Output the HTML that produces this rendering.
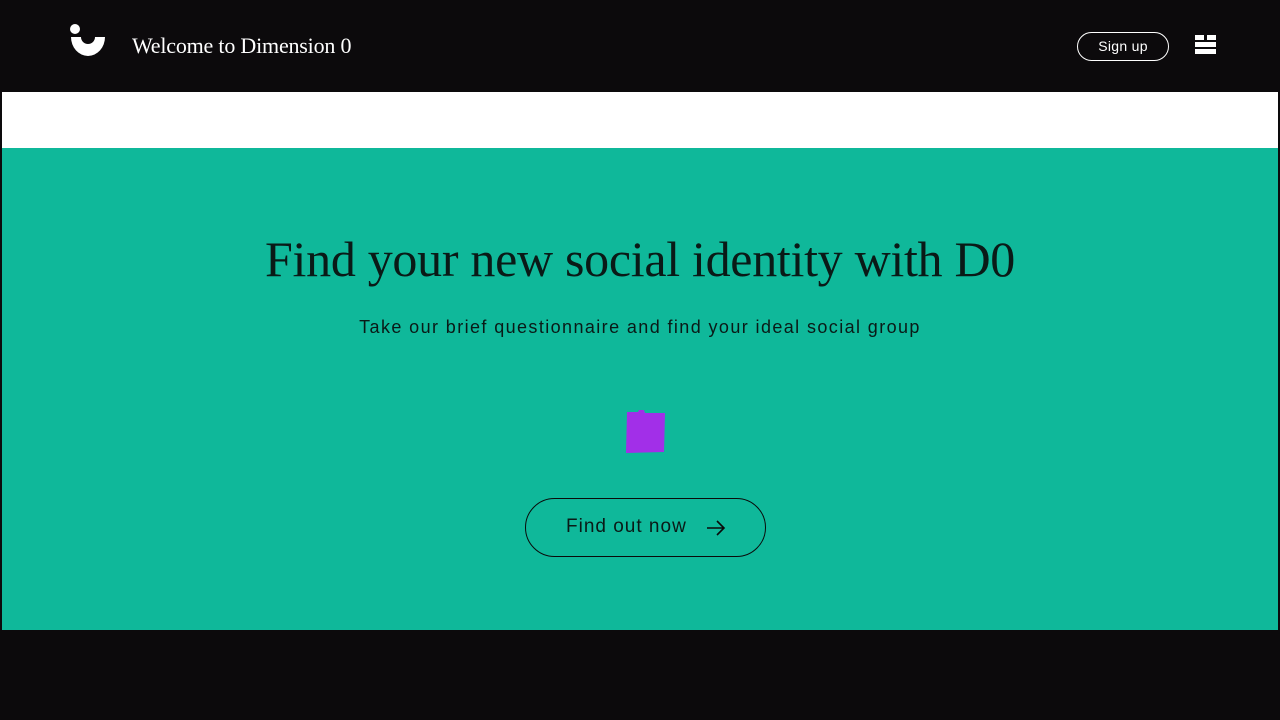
<!DOCTYPE html>
<html><head><style>
body{margin:0;width:1280px;height:720px;background:#0c0a0c;position:relative;overflow:hidden;font-family:"Liberation Sans",sans-serif}
.w{position:absolute;left:2px;width:1276px;top:92px;height:56px;background:#fff}
.t{position:absolute;left:2px;width:1276px;top:148px;height:482px;background:#0fb89a}
.title{position:absolute;left:0;width:1280px;top:230px;text-align:center;font-family:"Liberation Serif",serif;font-size:50px;color:#0a1a17;letter-spacing:-0.3px}
.sub{position:absolute;left:0;width:1280px;top:317px;text-align:center;font-size:18px;color:#0a1a17;letter-spacing:1.4px}
.btn{position:absolute;left:525px;top:498px;width:239px;height:57px;border:1.5px solid #0a0a0a;border-radius:30px;box-sizing:content-box}
.btn span{position:absolute;left:40px;top:17px;font-size:19px;color:#0a1a17;letter-spacing:1px}
.brand{position:absolute;left:132px;top:33px;font-family:"Liberation Serif",serif;font-size:22px;color:#fff;letter-spacing:-0.2px}
.su{position:absolute;left:1077px;top:32px;width:90px;height:27px;border:1.5px solid #fff;border-radius:15px;color:#fff;font-size:14px;text-align:center;line-height:27px;letter-spacing:0.3px}
</style></head><body>
<svg style="position:absolute;left:66px;top:20px" width="44" height="40"><circle cx="9" cy="9" r="5" fill="#fff"/><path d="M5 17 L39 17 A17 19 0 0 1 5 17 Z M15 17 A7 7 0 0 0 29 17 Z" fill="#fff" fill-rule="evenodd"/></svg>
<div class="brand">Welcome to Dimension 0</div>
<div class="su">Sign up</div>
<svg style="position:absolute;left:1195px;top:35px" width="22" height="20"><rect x="0" y="0" width="9" height="5" fill="#fff"/><rect x="12" y="0" width="9" height="5" fill="#fff"/><rect x="0" y="7" width="21" height="5" fill="#fff"/><rect x="0" y="14" width="21" height="5" fill="#fff"/></svg>
<div class="w"></div>
<div class="t"></div>
<div class="title">Find your new social identity with D0</div>
<div class="sub">Take our brief questionnaire and find your ideal social group</div>
<svg style="position:absolute;left:624px;top:408px" width="44" height="48"><path d="M3 4 L14 4 L15 2 L20 2 L21 5 L41 5 L40 44 L2 45 Z" fill="#a22fe8"/></svg>
<div class="btn"><span>Find out now</span>
<svg style="position:absolute;left:180px;top:20px" width="20" height="18"><path d="M1 9 H18 M11 2 L18 9 L11 16" stroke="#0a0a0a" stroke-width="1.6" fill="none"/></svg></div>
</body></html>
